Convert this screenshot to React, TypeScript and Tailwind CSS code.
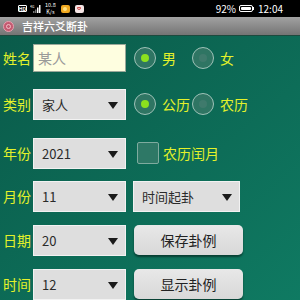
import React from 'react';

const font = { fontFamily: '"Noto Sans CJK SC", "Noto Sans", sans-serif' };

function Tri() {
  return (
    <svg width="10" height="7" viewBox="0 0 10 7" className="shrink-0">
      <path d="M0 0 H10 L5 7 Z" fill="#1a1a1a" />
    </svg>
  );
}

function Select({ value, width = 'w-[93px]' }: { value: string; width?: string }) {
  return (
    <div
      className={`${width} h-[31px] bg-[#dedede] border border-[#f2f2f2] flex items-center justify-between pl-[8px] pr-[7px] pt-[2px] text-[13px] text-[#2a2a2a]`}
    >
      <span>{value}</span>
      <Tri />
    </div>
  );
}

function Radio({ checked, label, w }: { checked: boolean; label: string; w: string }) {
  return (
    <div className={`flex items-center ${w}`}>
      <div className="w-[22px] h-[22px] rounded-full border-[1.5px] border-[#9fc2b8] bg-[#2f7563] flex items-center justify-center shrink-0">
        <div className={`w-[8px] h-[8px] rounded-full ${checked ? 'bg-[#8ce01e]' : 'bg-[#3f7a6c]'}`} />
      </div>
      <span className="ml-[6px] text-[14px] text-[#e4f22a]">{label}</span>
    </div>
  );
}

function Label({ text }: { text: string }) {
  return <div className="w-[33px] pl-[3px] text-[14px] text-[#e4f22a] shrink-0">{text}</div>;
}

function Button({ text }: { text: string }) {
  return (
    <div className="w-[109px] h-[30px] rounded-[5px] bg-gradient-to-b from-[#e8e8e8] to-[#d8d8d8] shadow-[0_2px_2px_rgba(0,0,0,0.45)] flex items-center justify-center text-[14px] text-[#222]">
      {text}
    </div>
  );
}

function StatusBar() {
  return (
    <div className="h-[18px] bg-black flex items-center text-white text-[10px] px-[18px]">
      <div className="flex items-center gap-[3px]">
        <div className="w-[9px] h-[7px] border border-white rounded-[1px] text-[5px] leading-[5px] font-bold flex items-center justify-center">HD</div>
        <svg width="11" height="8" viewBox="0 0 11 8">
          <text x="0" y="3" fontSize="3.5" fill="#fff">4G</text>
          <rect x="3" y="6" width="1.5" height="2" fill="#777" />
          <rect x="5" y="4.5" width="1.5" height="3.5" fill="#777" />
          <rect x="7" y="2.5" width="1.5" height="5.5" fill="#fff" />
          <rect x="9" y="0" width="1.5" height="8" fill="#fff" />
        </svg>
        <div className="flex flex-col items-center gap-[1px] ml-[1px]">
          <span className="text-[5.5px] leading-[6px]">10.8</span>
          <span className="text-[5.5px] leading-[6px]">K/s</span>
        </div>
        <div className="w-[9px] h-[8px] rounded-[2px] bg-[#f0a820] ml-[2px] flex items-center justify-center">
          <div className="w-[4px] h-[4px] rounded-full bg-[#fde080]" />
        </div>
        <div className="w-[9px] h-[8px] rounded-[2px] bg-[#f4e4e4] ml-[2px] flex items-center justify-center">
          <div className="w-[4px] h-[3px] border border-[#d05050] rounded-b-full" />
        </div>
      </div>
      <div className="ml-auto flex items-center gap-[2px] -mr-[1px]">
        <span>92%</span>
        <div className="flex items-center ml-[1px]">
          <div className="w-[14px] h-[7px] border border-white rounded-[2px] p-[1px]">
            <div className="w-full h-full bg-white rounded-[1px]" />
          </div>
          <div className="w-[1px] h-[3px] bg-white" />
        </div>
        <span className="ml-[2px]">12:04</span>
      </div>
    </div>
  );
}

function TitleBar() {
  return (
    <div className="h-[20px] bg-gradient-to-b from-[#a2a2a2] to-[#747474] border-b border-[#1d4a3e] flex items-center pl-[3px]">
      <div className="w-[11px] h-[11px] rounded-full bg-[#c45a70] border border-[#e8a0b0] flex items-center justify-center">
        <div className="w-[5px] h-[5px] rounded-full border border-[#f0c0c8]" />
      </div>
      <span className="ml-[8px] text-[11px] text-white font-medium">吉祥六爻断卦</span>
    </div>
  );
}

export default function App() {
  return (
    <div className="w-[300px] h-[300px] overflow-hidden flex flex-col" style={font}>
      <StatusBar />
      <TitleBar />
      <div className="flex-1 bg-gradient-to-br from-[#0a5b4a] to-[#0f7a62] flex flex-col">
        {/* 姓名 */}
        <div className="h-[32px] mt-[6px] flex items-center">
          <Label text="姓名" />
          <div className="w-[93px] h-[28px] bg-[#fefee0] border border-[#9aa89a] flex items-center pl-[4px] text-[14px] text-[#9a9a9a]">
            某人
          </div>
          <div className="ml-[8px] flex items-center">
            <Radio checked label="男" w="w-[58px]" />
            <Radio checked={false} label="女" w="w-[50px]" />
          </div>
        </div>

        {/* 类别 */}
        <div className="h-[32px] mt-[14px] flex items-center">
          <Label text="类别" />
          <Select value="家人" />
          <div className="ml-[8px] flex items-center">
            <Radio checked label="公历" w="w-[58px]" />
            <Radio checked={false} label="农历" w="w-[60px]" />
          </div>
        </div>

        {/* 年份 */}
        <div className="h-[32px] mt-[17px] flex items-center">
          <Label text="年份" />
          <Select value="2021" />
          <div className="ml-[11px] flex items-center">
            <div className="w-[22px] h-[22px] rounded-[2px] border border-[#7fab9f] bg-[#2e7866]" />
            <span className="ml-[4px] text-[14px] text-[#e4f22a]">农历闰月</span>
          </div>
        </div>

        {/* 月份 */}
        <div className="h-[32px] mt-[11px] flex items-center">
          <Label text="月份" />
          <Select value="11" />
          <div className="ml-[7px]">
            <Select value="时间起卦" width="w-[107px]" />
          </div>
        </div>

        {/* 日期 */}
        <div className="h-[32px] mt-[12px] flex items-center">
          <Label text="日期" />
          <Select value="20" />
          <div className="ml-[8px]">
            <Button text="保存卦例" />
          </div>
        </div>

        {/* 时间 */}
        <div className="h-[32px] mt-[12px] flex items-center">
          <Label text="时间" />
          <Select value="12" />
          <div className="ml-[8px]">
            <Button text="显示卦例" />
          </div>
        </div>
      </div>
    </div>
  );
}
